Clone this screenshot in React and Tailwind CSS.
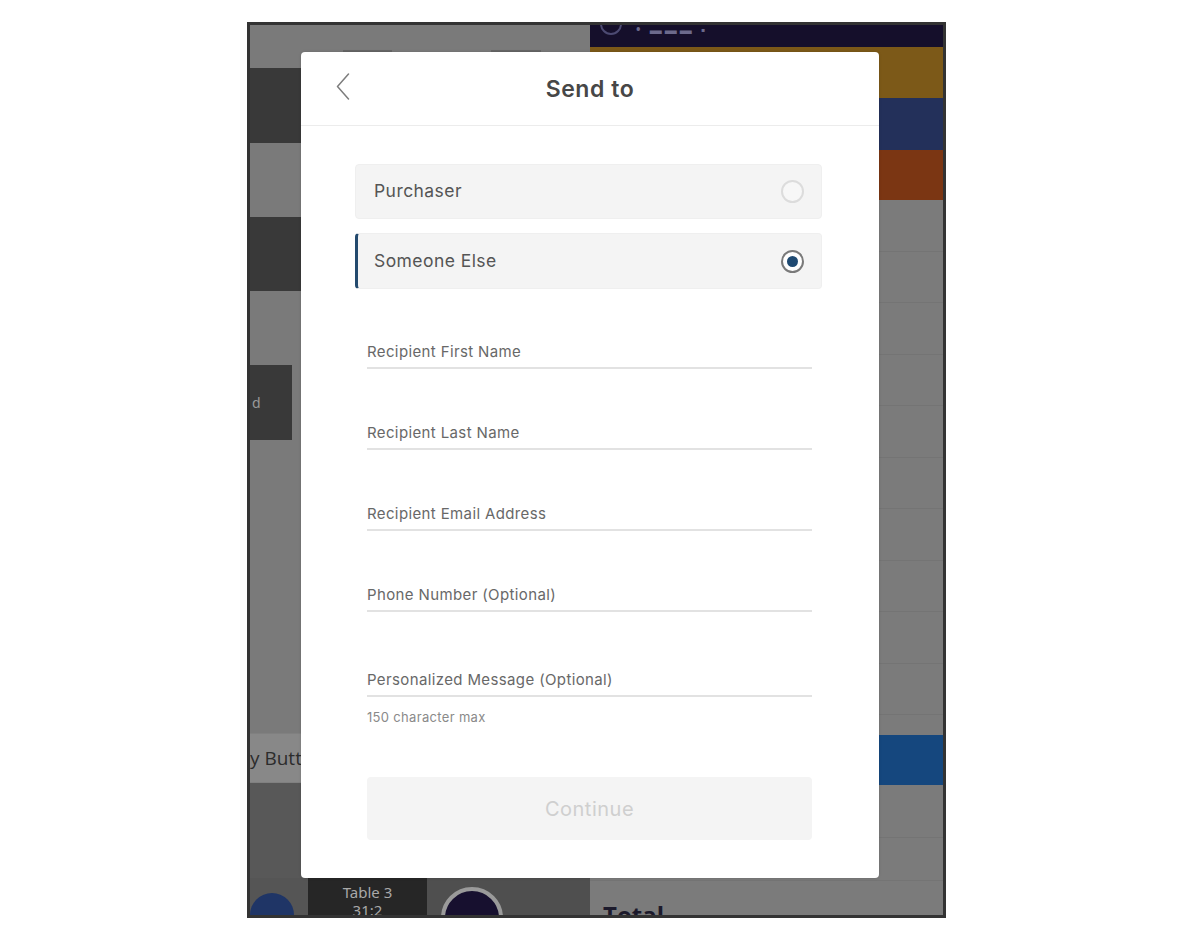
import React, { useState } from "react";

const font = { fontFamily: "Inter, 'Noto Sans', sans-serif" };

const fields = [
  { label: "Recipient First Name", gap: "mt-[53px]" },
  { label: "Recipient Last Name", gap: "mt-[54px]" },
  { label: "Recipient Email Address", gap: "mt-[54px]" },
  { label: "Phone Number (Optional)", gap: "mt-[54px]" },
  { label: "Personalized Message (Optional)", gap: "mt-[58px]" },
];

const Radio = ({ on }) =>
  on ? (
    <span className="flex h-[23px] w-[23px] items-center justify-center rounded-full border-2 border-[#7a7a7a] bg-white">
      <span className="h-[11px] w-[11px] rounded-full bg-[#1f4a72]" />
    </span>
  ) : (
    <span className="h-[23px] w-[23px] rounded-full border-2 border-[#dcdcdc] bg-[#f7f7f7]" />
  );

const LeftPanel = () => (
  <div className="flex w-[340px] flex-col">
    {/* top strip */}
    <div className="flex h-[43px] items-end bg-[#7a7a7a]">
      <div className="ml-[93px] h-[18px] w-[49px] bg-[#666]" />
      <div className="ml-[99px] h-[18px] w-[50px] bg-[#666]" />
    </div>
    <div className="h-[75px] bg-[#393939]" />
    <div className="h-[74px] bg-[#7a7a7a]" />
    <div className="h-[74px] bg-[#393939]" />
    <div className="h-[74px] bg-[#7a7a7a]" />
    <div className="flex h-[75px] bg-[#7a7a7a]">
      <div className="flex w-[42px] items-center bg-[#393939] pl-[2px] text-[14px] text-[#9a9a9a]">
        d
      </div>
    </div>
    <div className="h-[293px] bg-[#7a7a7a]" />
    <div className="flex h-[50px] items-center overflow-hidden border-y border-[#808080] bg-[#888]">
      <span
        className="ml-[-22px] whitespace-nowrap text-[19px] text-[#2c2c2c]"
        style={{ fontFamily: "'Open Sans', sans-serif" }}
      >
        Pay Button
      </span>
    </div>
    <div className="h-[95px] bg-[#585858]" />
    <div className="flex h-[37px] overflow-hidden">
      <div className="w-[58px] bg-[#555] pt-[15px]">
        <div className="h-[44px] w-[44px] rounded-full bg-[#1f3566]" />
      </div>
      <div className="flex w-[119px] flex-col items-center bg-[#262626] pt-[5px] text-[15px] leading-[18px] text-[#a9a9a9]">
        <span>Table 3</span>
        <span>31:2</span>
      </div>
      <div className="flex-1 bg-[#4f4f4f] pl-[14px] pt-[9px]">
        <div className="h-[62px] w-[62px] rounded-full border-[4px] border-[#9a9a9a] bg-[#17102f]" />
      </div>
    </div>
  </div>
);

const RightPanel = () => (
  <div className="flex flex-1 flex-col">
    <div className="flex h-[22px] items-start overflow-hidden bg-[#150f2b] pl-[10px]">
      <span className="mt-[-12px] h-[22px] w-[22px] rounded-full border-2 border-[#4c4a72]" />
      <span className="ml-[14px] mt-[-4px] text-[12px] font-bold tracking-[3px] text-[#6c6a8c]">
        • ▬▬▬ ▪
      </span>
    </div>
    <div className="h-[51px] bg-[#7c5918]" />
    <div className="h-[52px] bg-[#23305a]" />
    <div className="h-[50px] bg-[#7b3613]" />
    <div className="flex h-[535px] flex-col bg-[#7b7b7b]">
      {Array.from({ length: 10 }).map((_, i) => (
        <div key={i} className="h-[51.5px] shrink-0 border-b border-[#747474]" />
      ))}
    </div>
    <div className="h-[50px] bg-[#15477e]" />
    <div className="flex h-[95px] flex-col bg-[#7b7b7b]">
      <div className="h-[53px] border-b border-[#747474]" />
    </div>
    <div className="h-[35px] overflow-hidden border-t border-[#747474] bg-[#7b7b7b] pl-[13px] pt-[22px]">
      <span
        className="text-[24px] font-bold leading-none text-[#1c1a2c]"
        style={{ fontFamily: "'Open Sans', sans-serif" }}
      >
        Total
      </span>
    </div>
  </div>
);

const Modal = () => {
  const [choice, setChoice] = useState("else");

  return (
    <div
      className="absolute left-[51px] top-[27px] flex h-[826px] w-[578px] flex-col rounded-[4px] bg-white shadow-[0_0_3px_rgba(0,0,0,0.15)]"
      style={font}
    >
      {/* header */}
      <div className="relative flex h-[74px] shrink-0 items-center justify-center border-b border-[#ececec]">
        <svg
          className="absolute left-[35px] top-[21px]"
          width="14"
          height="28"
          viewBox="0 0 14 28"
          fill="none"
        >
          <polyline
            points="12.5,1 1.5,13.5 12.5,26"
            stroke="#7d7d7d"
            strokeWidth="1.5"
            strokeLinecap="round"
            strokeLinejoin="round"
          />
        </svg>
        <h1 className="mt-[2px] text-[23px] font-semibold tracking-wide text-[#474747]">Send to</h1>
      </div>

      {/* options */}
      <div className="ml-[54px] mt-[38px] flex w-[467px] flex-col gap-[14px]">
        <button
          onClick={() => setChoice("purchaser")}
          className={`flex h-[55px] items-center justify-between rounded-[4px] border border-[#efefef] bg-[#f4f4f4] pr-[17px] text-left ${
            choice === "purchaser" ? "border-l-[3px] border-l-[#234a6e] pl-[16px]" : "pl-[18px]"
          }`}
        >
          <span className="text-[17.5px] tracking-wide text-[#555]">Purchaser</span>
          <Radio on={choice === "purchaser"} />
        </button>
        <button
          onClick={() => setChoice("else")}
          className={`flex h-[56px] items-center justify-between rounded-[4px] border border-[#efefef] bg-[#f4f4f4] pr-[17px] text-left ${
            choice === "else" ? "border-l-[3px] border-l-[#234a6e] pl-[16px]" : "pl-[18px]"
          }`}
        >
          <span className="text-[17.5px] tracking-wide text-[#555]">Someone Else</span>
          <Radio on={choice === "else"} />
        </button>
      </div>

      {/* fields */}
      <div className="ml-[66px] flex w-[445px] flex-col">
        {fields.map((f) => (
          <div
            key={f.label}
            className={`${f.gap} border-b-2 border-[#e2e2e2] pb-[5px] text-[15px] leading-5 tracking-wide text-[#686868]`}
          >
            {f.label}
          </div>
        ))}
        <p className="mt-[12px] text-[13px] leading-4 tracking-wide text-[#8a8a8a]">150 character max</p>
        <button className="mt-[52px] h-[63px] rounded-[4px] bg-[#f4f4f4] text-[20px] tracking-wide text-[#cfcfcf]">
          Continue
        </button>
      </div>
    </div>
  );
};

export default function App() {
  return (
    <div className="h-[932px] w-full bg-white pl-[247px] pt-[22px]">
      <div className="relative flex h-[896px] w-[699px] overflow-hidden border-[3px] border-[#333]">
        <LeftPanel />
        <RightPanel />
        <Modal />
      </div>
    </div>
  );
}
